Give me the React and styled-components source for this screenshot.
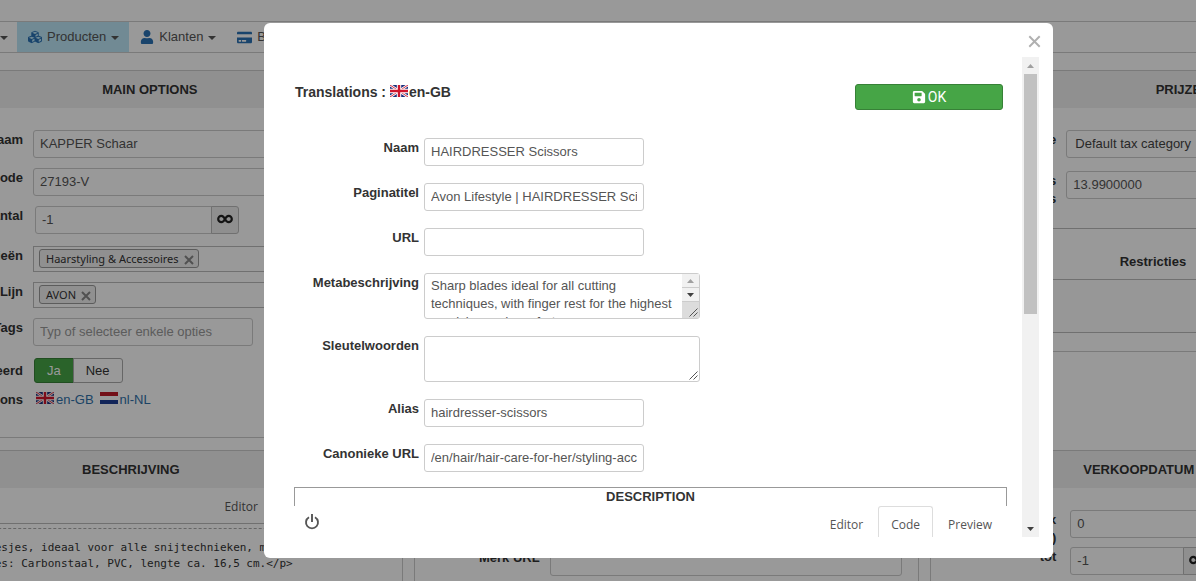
import { useState } from "react";
import styled, { createGlobalStyle } from "styled-components";
import { FaCubes, FaUser, FaCreditCard, FaSave } from "react-icons/fa";

const GlobalStyle = createGlobalStyle`
  * {
    box-sizing: border-box;
  }
  body {
    margin: 0;
    overflow: hidden;
    background: #fff;
    color: #333;
    font-family: "Liberation Sans", Arial, sans-serif;
    font-size: 13px;
    line-height: 18px;
  }
  button, input, textarea, select {
    margin: 0;
    font: inherit;
    color: inherit;
  }
`

const FlagGB = () => (
  <Flag viewBox="0 0 18 12" aria-hidden="true">
    <rect width="18" height="12" fill="#1b2f7c" />
    <path d="M0 0L18 12M18 0L0 12" stroke="#fff" strokeWidth="2.6" />
    <path d="M0 0L18 12M18 0L0 12" stroke="#d0142c" strokeWidth="0.9" />
    <path d="M9 0V12M0 6H18" stroke="#fff" strokeWidth="4.4" />
    <path d="M9 0V12M0 6H18" stroke="#d0142c" strokeWidth="2.4" />
  </Flag>
)

const FlagNL = () => (
  <Flag viewBox="0 0 18 12" aria-hidden="true">
    <rect width="18" height="12" fill="#fff" />
    <rect width="18" height="4" fill="#c01c28" />
    <rect y="8" width="18" height="4" fill="#1e3f94" />
  </Flag>
)

const Infinity = () => (
  <svg width="16" height="10" viewBox="0 0 16 10" aria-hidden="true">
    <path
      d="M8 5C6.8 2.6 5.8 1.8 4.4 1.8A3.2 3.2 0 0 0 4.4 8.2C5.8 8.2 6.8 7.4 8 5C9.2 2.6 10.2 1.8 11.6 1.8A3.2 3.2 0 0 1 11.6 8.2C10.2 8.2 9.2 7.4 8 5Z"
      fill="none"
      stroke="#222"
      strokeWidth="2.2"
    />
  </svg>
)

const Cross = ({ size, width }) => (
  <svg width={size} height={size} viewBox="0 0 10 10" aria-hidden="true">
    <path d="M1 1L9 9M9 1L1 9" stroke="currentColor" strokeWidth={width} fill="none" />
  </svg>
)

const Arrow = ({ up }) => (
  <svg width="7" height="4" viewBox="0 0 7 4" aria-hidden="true">
    <path d={up ? "M0 4L3.5 0L7 4Z" : "M0 0L3.5 4L7 0Z"} fill={up ? "#a0a0a0" : "#404040"} />
  </svg>
)

const EditorTabs = ({ line }) => {
  const [active, setActive] = useState("Code");
  return (
    <Tabs $line={line}>
      <Power type="button" aria-label="Toggle editor">
        <svg width="16" height="16" viewBox="0 0 16 16">
          <path d="M5 3.2A6 6 0 1 0 11 3.2" fill="none" stroke="#555" strokeWidth="1.9" />
          <path d="M8 0V8" stroke="#555" strokeWidth="1.9" />
        </svg>
      </Power>
      {["Editor", "Code", "Preview"].map((name) => (
        <Tab key={name} type="button" $active={name === active} onClick={() => setActive(name)}>
          {name}
        </Tab>
      ))}
    </Tabs>
  );
}

const TextBox = ({ id, value, scroll }) => (
  <TextFrame>
    <textarea id={id} defaultValue={value} />
    {scroll && (
      <MiniScroll>
        <span><Arrow up /></span>
        <span><Arrow /></span>
      </MiniScroll>
    )}
    <Grip width="9" height="9" viewBox="0 0 9 9" aria-hidden="true">
      <path d="M0.5 8.5L8.5 0.5M4.5 8.5L8.5 4.5" stroke="#555" strokeWidth="1" />
    </Grip>
  </TextFrame>
)

const MainNav = () => (
  <Nav>
    <NavItem href="#systeem" $first aria-label="Systeem"><Caret /></NavItem>
    <NavItem href="#producten" $active><FaCubes size={14} />Producten<Caret /></NavItem>
    <NavItem href="#klanten"><FaUser size={14} />Klanten<Caret /></NavItem>
    <NavItem href="#bestellingen"><FaCreditCard size={15} />Bestellingen<Caret /></NavItem>
  </Nav>
)

const MainOptions = () => (
  <Panel>
    <PanelTitle>MAIN OPTIONS</PanelTitle>
    <Form $gap={10}>
      <Row>
        <label htmlFor="name">Naam</label>
        <Input id="name" defaultValue="KAPPER Schaar" $wide />
      </Row>
      <Row>
        <label htmlFor="code">Code</label>
        <Input id="code" defaultValue="27193-V" $wide />
      </Row>
      <Row>
        <label htmlFor="stock">Aantal</label>
        <Append $inset>
          <input id="stock" defaultValue="-1" />
          <button type="button" aria-label="Onbeperkt"><Infinity /></button>
        </Append>
      </Row>
      <Row>
        <label>Categorieën</label>
        <Chosen>
          <Chip>Haarstyling &amp; Accessoires<button type="button" aria-label="Verwijder"><Cross size={10} width={2} /></button></Chip>
        </Chosen>
      </Row>
      <Row>
        <label>Lijn</label>
        <Chosen>
          <Chip>AVON<button type="button" aria-label="Verwijder"><Cross size={10} width={2} /></button></Chip>
        </Chosen>
      </Row>
      <Row $after={2}>
        <label htmlFor="tags">Tags</label>
        <Input id="tags" placeholder="Typ of selecteer enkele opties" />
      </Row>
      <Row $after={-3}>
        <Middle>Gepubliceerd</Middle>
        <Toggle>
          <button type="button">Ja</button>
          <button type="button">Nee</button>
        </Toggle>
      </Row>
      <Row>
        <label>Translations</label>
        <Languages>
          <a href="#en"><FlagGB />en-GB</a>
          <a href="#nl"><FlagNL />nl-NL</a>
        </Languages>
      </Row>
    </Form>
  </Panel>
)

const Prices = () => (
  <Panel>
    <PanelTitle>PRIJZEN</PanelTitle>
    <Form $gap={10} $flush>
      <Row $after={3}>
        <label htmlFor="tax">Tax type</label>
        <Select id="tax"><option>Default tax category</option></Select>
      </Row>
      <Row>
        <label htmlFor="price">Prijs<br />taxes</label>
        <Input id="price" defaultValue="13.9900000" $wide />
      </Row>
    </Form>
    <PriceTable>
      <thead>
        <tr><th>Prijs</th><th>Restricties</th><th>Acties</th></tr>
      </thead>
      <tbody>
        <tr><td colSpan="3" /></tr>
      </tbody>
    </PriceTable>
  </Panel>
)

const TranslationModal = () => (
  <Overlay>
    <Modal role="dialog" aria-label="Translations">
      <Close type="button" aria-label="Close"><Cross size={13} width={1.5} /></Close>
      <ModalBody>
        <ModalHead>
          <h2>Translations : <FlagGB />en-GB</h2>
          <OkButton type="button"><FaSave size={14} />OK</OkButton>
        </ModalHead>
        <ModalForm>
          <Row>
            <label htmlFor="t-name">Naam</label>
            <Input id="t-name" defaultValue="HAIRDRESSER Scissors" />
          </Row>
          <Row>
            <label htmlFor="t-title">Paginatitel</label>
            <Input id="t-title" defaultValue="Avon Lifestyle | HAIRDRESSER Scissors" />
          </Row>
          <Row>
            <label htmlFor="t-url">URL</label>
            <Input id="t-url" />
          </Row>
          <Row>
            <label htmlFor="t-meta">Metabeschrijving</label>
            <TextBox
              id="t-meta"
              scroll
              value="Sharp blades ideal for all cutting techniques, with finger rest for the highest precision and comfort"
            />
          </Row>
          <Row>
            <label htmlFor="t-keys">Sleutelwoorden</label>
            <TextBox id="t-keys" />
          </Row>
          <Row>
            <label htmlFor="t-alias">Alias</label>
            <Input id="t-alias" defaultValue="hairdresser-scissors" />
          </Row>
          <Row>
            <label htmlFor="t-canon">Canonieke URL</label>
            <Input id="t-canon" defaultValue="/en/hair/hair-care-for-her/styling-accessories" />
          </Row>
        </ModalForm>
        <Legend>DESCRIPTION</Legend>
        <EditorTabs />
      </ModalBody>
      <ScrollBar>
        <span><Arrow up /></span>
        <Thumb />
        <span><Arrow /></span>
      </ScrollBar>
    </Modal>
  </Overlay>
)

const App = () => {
  return (
    <>
      <GlobalStyle />
      <Page>
        <MainNav />
        <Board>
          <MainOptions />
          <Panel>
            <PanelTitle>SPECIFICATIES</PanelTitle>
          </Panel>
          <Prices />
          <Panel $tall>
            <PanelTitle $aside={38}>BESCHRIJVING</PanelTitle>
            <EditorTabs line />
            <Code>{"   met fijne mesjes, ideaal voor alle snijtechnieken, met\n   Specificaties: Carbonstaal, PVC, lengte ca. 16,5 cm.</p>"}</Code>
          </Panel>
          <Panel $tall>
            <PanelTitle>MERK</PanelTitle>
            <Form $gap={10}>
              <Row>
                <label htmlFor="brand">Merk</label>
                <Input id="brand" $wide />
              </Row>
              <Row>
                <label htmlFor="brand-url">Merk URL</label>
                <Input id="brand-url" $wide />
              </Row>
            </Form>
          </Panel>
          <Panel $tall>
            <PanelTitle>VERKOOPDATUM / AANTALLEN</PanelTitle>
            <Form $gap={14} $flush>
              <Row $after={-10}>
                <label htmlFor="max">Max<br />(stuks)</label>
                <Input id="max" defaultValue="0" $wide />
              </Row>
              <Row>
                <label htmlFor="until">tot</label>
                <Append $short>
                  <input id="until" defaultValue="-1" />
                  <button type="button" aria-label="Onbeperkt"><Infinity /></button>
                </Append>
              </Row>
            </Form>
          </Panel>
        </Board>
      </Page>
      <TranslationModal />
    </>
  );
}

const Page = styled.div`
  height: 100vh;
  padding-top: 21px;
  overflow: hidden;
`

const Nav = styled.nav`
  display: flex;
  height: 32px;
  border: solid #ccc;
  border-width: 1px 0;
`

const NavItem = styled.a`
  display: flex;
  align-items: center;
  gap: 5px;
  padding: 0 ${(props) => (props.$first ? 9 : 10)}px 0 ${(props) => (props.$first ? 0 : 11)}px;
  background: ${(props) => (props.$active ? "#bce6f7" : "transparent")};
  color: #555;
  text-decoration: none;
  svg {
    color: #2a72b5;
  }
`

const Caret = styled.span`
  margin-top: 2px;
  border: 4px solid transparent;
  border-top-color: #555;
  border-bottom: 0;
`

/* three equal columns, wider than the window and scrolled sideways */
const Board = styled.main`
  display: grid;
  grid-template-columns: repeat(3, 1fr);
  grid-template-rows: auto 1fr;
  align-items: start;
  gap: 12px 11px;
  width: calc(100% + 343px);
  margin: 17px 0 0 -103px;
`

const Panel = styled.section`
  min-width: 0;
  min-height: ${(props) => (props.$tall ? 200 : 0)}px;
  border: 1px solid #ccc;
`

const PanelTitle = styled.h2`
  margin: 0;
  padding: 0 ${(props) => props.$aside || 0}px 0 0;
  background: #f0f0f0;
  font-size: 13px;
  line-height: 37px;
  text-align: center;
`

const Row = styled.div`
  display: flex;
  align-items: flex-start;
  margin-bottom: ${(props) => props.$after || 0}px;
  label {
    flex: none;
    padding-top: 1px;
    font-weight: bold;
    text-align: right;
  }
`

const Middle = styled.label`
  align-self: center;
`

const Form = styled.form`
  display: flex;
  flex-direction: column;
  gap: 10px;
  padding: 22px 16px ${(props) => (props.$flush ? 0 : 28)}px 0;
  label {
    width: 125px;
    margin-right: ${(props) => props.$gap}px;
  }
`

const Input = styled.input`
  flex: ${(props) => (props.$wide ? "1" : "none")};
  width: 220px;
  min-width: 0;
  height: 28px;
  padding: 3px 6px 5px;
  border: 1px solid #ccc;
  border-radius: 3px;
  background: #fff;
  color: #555;
  &::placeholder {
    color: #999;
  }
`

const Select = styled.select`
  flex: 1;
  height: 28px;
  padding: 4px 8px;
  border: 1px solid #ccc;
  border-radius: 3px;
  background: #fff;
  color: #444;
  appearance: none;
`

const Append = styled.div`
  display: flex;
  height: 28px;
  margin: ${(props) => (props.$inset ? "0 2px 2px" : "0")};
  input {
    width: ${(props) => (props.$short ? 114 : 177)}px;
    padding: 4px 6px;
    border: 1px solid #ccc;
    border-radius: 3px 0 0 3px;
    background: #fff;
    color: #555;
  }
  button {
    display: flex;
    align-items: center;
    justify-content: center;
    width: 28px;
    margin-left: -1px;
    padding: 0 0 2px;
    border: 1px solid #bbb;
    border-radius: 0 3px 3px 0;
    background: #eee;
  }
`

const Chosen = styled.div`
  flex: 1;
  display: flex;
  align-items: flex-start;
  height: 26px;
  padding: 2px 5px;
  border: 1px solid #bbb;
`

const Chip = styled.span`
  display: flex;
  align-items: center;
  gap: 5px;
  height: 19px;
  padding: 0 4px 0 6px;
  border: 1px solid #999;
  border-radius: 3px;
  background: #f0f0f0;
  font-family: "Noto Sans", "Open Sans", sans-serif;
  font-size: 11px;
  button {
    display: flex;
    padding: 2px 0 0;
    border: 0;
    background: none;
    color: #888;
  }
`

const Toggle = styled.div`
  display: flex;
  margin-left: 1px;
  button {
    height: 25px;
    padding: 0 12px;
    border: 1px solid #aaa;
    border-radius: 0 3px 3px 0;
    background: #fff;
  }
  button:first-child {
    border-color: #378137;
    border-radius: 3px 0 0 3px;
    background: #46a546;
    color: #fff;
  }
  button + button {
    margin-left: -1px;
  }
`

const Flag = styled.svg`
  width: 18px;
  height: 12px;
`

const Languages = styled.div`
  display: flex;
  gap: 6px;
  padding: 1px 0 0 3px;
  a {
    color: #3071a9;
    text-decoration: none;
  }
  svg {
    margin-right: 2px;
  }
`

const PriceTable = styled.table`
  width: 100%;
  margin: 20px 0 18px;
  border-collapse: collapse;
  th {
    height: 51px;
    padding: 16px 0 0;
    border: solid #bbb;
    border-width: 1px 0;
  }
  th:first-child {
    width: 32%;
  }
  th:nth-child(2) {
    width: 24%;
  }
  td {
    height: 53px;
    padding: 0;
    background: #fcfcfc;
    border-bottom: 1px solid #bbb;
  }
`

const Tabs = styled.div`
  display: flex;
  align-items: flex-start;
  gap: 2px;
  height: 36px;
  padding-right: 2px;
  border-bottom: ${(props) => (props.$line ? "1px solid #bbb" : "0")};
`

const Power = styled.button`
  display: flex;
  margin-right: auto;
  padding: 8px 10px;
  border: 0;
  background: none;
`

const Tab = styled.button`
  height: 37px;
  padding: 0 12px;
  border: 1px solid ${(props) => (props.$active ? "#ddd" : "transparent")};
  border-bottom: 0;
  border-radius: 3px 3px 0 0;
  background: none;
  color: #555;
  font-family: "Open Sans", sans-serif;
  font-size: 12px;
`

const Code = styled.pre`
  margin: 4px 0 0;
  padding: 11px 0 0 4px;
  border-top: 1px dashed #aaa;
  font-family: "DejaVu Sans Mono", monospace;
  font-size: 11px;
  line-height: 16px;
`

const Overlay = styled.div`
  position: fixed;
  inset: 0;
  display: flex;
  padding: 23px 143px 23px 264px;
  background: rgba(0, 0, 0, 0.4);
`

const Modal = styled.div`
  position: relative;
  flex: 1;
  display: flex;
  gap: 15px;
  min-width: 0;
  padding: 34px 14px 21px 30px;
  border-radius: 6px;
  background: #fff;
`

const Close = styled.button`
  position: absolute;
  top: 12px;
  right: 12px;
  display: flex;
  padding: 0;
  border: 0;
  background: none;
  color: #b0b0b0;
`

const ModalBody = styled.div`
  flex: 1;
  min-width: 0;
  overflow: hidden;
`

const ModalHead = styled.header`
  display: flex;
  justify-content: space-between;
  margin: 27px 4px 28px 1px;
  h2 {
    margin: 0;
    font-size: 14px;
    line-height: 16px;
  }
  h2 svg {
    margin-right: 1px;
  }
`

const OkButton = styled.button`
  display: flex;
  align-items: center;
  justify-content: center;
  gap: 2px;
  width: 148px;
  height: 26px;
  border: 1px solid #378137;
  border-radius: 3px;
  background: #46a546;
  color: #fff;
  font-family: Roboto, sans-serif;
  font-size: 14px;
`

const ModalForm = styled.form`
  display: flex;
  flex-direction: column;
  gap: 17px;
  label {
    width: 125px;
    margin-right: 5px;
  }
`

const TextFrame = styled.div`
  position: relative;
  display: flex;
  width: 276px;
  height: 46px;
  border: 1px solid #ccc;
  border-radius: 3px;
  textarea {
    flex: 1;
    min-width: 0;
    padding: 3px 6px;
    border: 0;
    background: none;
    color: #555;
    overflow: hidden;
    resize: none;
  }
`

const MiniScroll = styled.div`
  width: 17px;
  background: #dcdcdc;
  span {
    display: flex;
    align-items: center;
    justify-content: center;
    height: 14px;
    border-bottom: 1px solid #ccc;
    background: #f1f1f1;
  }
`

const Grip = styled.svg`
  position: absolute;
  right: 1px;
  bottom: 1px;
`

const Legend = styled.h3`
  height: 19px;
  margin: 15px 0 0;
  border: 1px solid #999;
  border-bottom: 0;
  font-size: 13px;
  line-height: 18px;
  text-align: center;
`

const ScrollBar = styled.div`
  display: flex;
  flex-direction: column;
  align-items: center;
  width: 17px;
  background: #f1f1f1;
  span {
    display: flex;
    align-items: center;
    height: 17px;
  }
`

const Thumb = styled.div`
  width: 13px;
  height: 50%;
  margin-bottom: auto;
  background: #c1c1c1;
`

export default App;
